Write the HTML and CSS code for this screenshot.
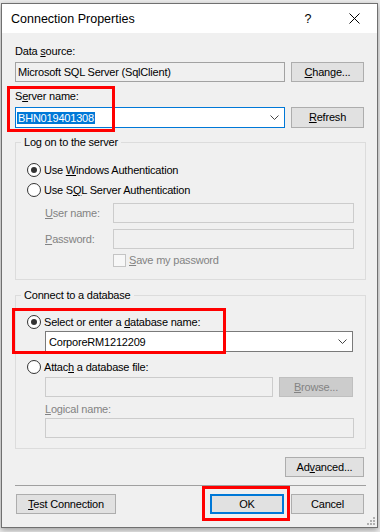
FILE: index.html
```html
<!DOCTYPE html>
<html lang="en">
  <head>
    <meta charset="UTF-8" />
    <title>Connection Properties</title>
    <link rel="stylesheet" href="styles.css">
  </head>
  <body>
    <div class="window">
      <!-- Title bar -->
      <div class="titlebar">
        <span class="title">Connection Properties</span>
        <div class="caption-btn help">?</div>
        <div class="caption-btn">
          <svg width="11" height="11" viewBox="0 0 11 11">
            <path d="M0.5 0.5 L10.5 10.5 M10.5 0.5 L0.5 10.5" stroke="#000" stroke-width="1" fill="none" />
          </svg>
        </div>
      </div>

      <div class="content">
        <!-- Data source -->
        <p class="label">Data <u>s</u>ource:</p>
        <div class="row">
          <div class="textbox readonly source-box">Microsoft SQL Server (SqlClient)</div>
          <div class="btn change-btn"><u>C</u>hange...</div>
        </div>

        <!-- Server name -->
        <p class="label server-label">S<u>e</u>rver name:</p>
        <div class="row">
          <div class="combo focused server-combo">
            <span class="selected">BHN019401308</span>
            <svg class="chevron" width="9" height="5" viewBox="0 0 9 5">
              <path d="M0.5 0.5 L4.5 4.5 L8.5 0.5" stroke="#444" fill="none" />
            </svg>
          </div>
          <div class="btn refresh-btn"><u>R</u>efresh</div>
        </div>

        <!-- Log on group -->
        <div class="group logon-group">
          <p class="group-title">Log on to the server</p>
          <div class="option first-option">
            <span class="radio checked"></span>
            <span>Use <u>W</u>indows Authentication</span>
          </div>
          <div class="option second-option">
            <span class="radio"></span>
            <span>Use S<u>Q</u>L Server Authentication</span>
          </div>
          <div class="field user-field">
            <span class="field-label disabled-text"><u>U</u>ser name:</span>
            <div class="textbox disabled field-box"></div>
          </div>
          <div class="field password-field">
            <span class="field-label disabled-text"><u>P</u>assword:</span>
            <div class="textbox disabled field-box"></div>
          </div>
          <div class="check-row">
            <span class="checkbox"></span>
            <span class="disabled-text"><u>S</u>ave my password</span>
          </div>
        </div>

        <!-- Database group -->
        <div class="group database-group">
          <p class="group-title">Connect to a database</p>
          <div class="option db-option">
            <span class="radio checked"></span>
            <span>Select or enter a <u>d</u>atabase name:</span>
          </div>
          <div class="combo db-combo">
            <span class="combo-text">CorporeRM1212209</span>
            <svg class="chevron" width="9" height="5" viewBox="0 0 9 5">
              <path d="M0.5 0.5 L4.5 4.5 L8.5 0.5" stroke="#444" fill="none" />
            </svg>
          </div>
          <div class="option attach-option">
            <span class="radio"></span>
            <span>Attac<u>h</u> a database file:</span>
          </div>
          <div class="indent-row file-row">
            <div class="textbox disabled file-box"></div>
            <div class="btn disabled browse-btn"><u>B</u>rowse...</div>
          </div>
          <p class="label disabled-text logical-label"><u>L</u>ogical name:</p>
          <div class="textbox disabled logical-box"></div>
        </div>

        <!-- Advanced -->
        <div class="advanced-row">
          <div class="btn advanced-btn">Ad<u>v</u>anced...</div>
        </div>

        <div class="separator"></div>

        <!-- Bottom buttons -->
        <div class="footer">
          <div class="btn test-btn"><u>T</u>est Connection</div>
          <div class="btn default ok-btn">OK</div>
          <div class="btn cancel-btn">Cancel</div>
        </div>
      </div>

      <!-- resize grip -->
      <svg class="grip" width="8" height="8" viewBox="0 0 8 8">
        <rect x="6" y="0" width="2" height="2" fill="#b0b0b0" />
        <rect x="3" y="3" width="2" height="2" fill="#b0b0b0" />
        <rect x="6" y="3" width="2" height="2" fill="#b0b0b0" />
        <rect x="0" y="6" width="2" height="2" fill="#b0b0b0" />
        <rect x="3" y="6" width="2" height="2" fill="#b0b0b0" />
        <rect x="6" y="6" width="2" height="2" fill="#b0b0b0" />
      </svg>
    </div>

    <!-- red annotation boxes -->
    <div class="mark mark-server"></div>
    <div class="mark mark-database"></div>
    <div class="mark mark-ok"></div>
  </body>
</html>
```

FILE: styles.css
```css
* {
  margin: 0;
  padding: 0;
  box-sizing: border-box;
}

body {
  position: relative;
  height: 532px;
  overflow: hidden;
  background-color: #ededed;
  font-family: "Liberation Sans", Arial, sans-serif;
  font-size: 11px;
  letter-spacing: -0.2px;
  color: #000;
}

u {
  text-decoration: underline;
  text-underline-offset: 1px;
}

.window {
  position: relative;
  margin: 3px 0 0 1px;
  width: 377px;
  height: 525px;
  background-color: #f0f0f0;
  border: 1px solid #707070;
  box-shadow: 0 2px 6px rgba(0, 0, 0, 0.35);
}

/* Title bar */
.titlebar {
  display: flex;
  align-items: center;
  height: 29px;
  padding-left: 9px;
  background-color: #fff;
}

.title {
  flex: 1;
  font-size: 12.5px;
  letter-spacing: 0;
}

.caption-btn {
  display: flex;
  align-items: center;
  justify-content: center;
  width: 46px;
  height: 29px;
}

.help {
  font-size: 12.5px;
  letter-spacing: 0;
}

.content {
  padding: 12px 11px 0 13px;
}

.label {
  height: 13px;
  line-height: 13px;
}

.row {
  display: flex;
  gap: 6px;
  margin-top: 4px;
}

.server-label {
  margin-top: 8px;
}

/* Text boxes, combos, buttons */
.textbox {
  height: 20px;
  padding-left: 2px;
  line-height: 18px;
  white-space: nowrap;
  background-color: #fff;
  border: 1px solid #7a7a7a;
}

.textbox.readonly {
  background-color: #f0f0f0;
  border-color: #a2a2a2;
}

.textbox.disabled {
  background-color: #f0f0f0;
  border-color: #cccccc;
}

.source-box {
  width: 270px;
}

.combo {
  display: flex;
  align-items: center;
  height: 21px;
  padding: 0 5px 0 1px;
  background-color: #fff;
  border: 1px solid #7a7a7a;
}

.combo.focused {
  border-color: #0078d7;
}

.combo .chevron {
  margin-left: auto;
}

.selected {
  display: inline-block;
  padding: 0 1px;
  line-height: 12px;
  color: #fff;
  background-color: #0078d7;
}

.combo-text {
  padding-left: 2px;
}

.server-combo {
  width: 270px;
}

.btn {
  height: 20px;
  line-height: 18px;
  text-align: center;
  white-space: nowrap;
  background-color: #e1e1e1;
  border: 1px solid #adadad;
}

.btn.disabled {
  color: #838383;
  background-color: #cccccc;
  border-color: #bfbfbf;
}

.btn.default {
  line-height: 16px;
  border: 2px solid #0078d7;
}

.change-btn {
  width: 73px;
}

.refresh-btn {
  width: 73px;
  height: 21px;
  line-height: 19px;
}

/* Group boxes */
.group {
  padding: 0 11px 12px 11px;
  border: 1px solid #dcdcdc;
}

.group-title {
  width: max-content;
  margin: -7px 0 0 -6px;
  padding: 0 3px;
  line-height: 13px;
  background-color: #f0f0f0;
}

.logon-group {
  margin-top: 14px;
}

.database-group {
  margin-top: 15px;
  padding-bottom: 10px;
}

.option {
  display: flex;
  align-items: center;
  gap: 3px;
  height: 18px;
}

.first-option {
  margin-top: 12px;
}

.second-option {
  margin-top: 2px;
}

.radio {
  display: flex;
  align-items: center;
  justify-content: center;
  width: 14px;
  height: 14px;
  background-color: #fff;
  border: 1px solid #333;
  border-radius: 50%;
}

.radio.checked::after {
  content: "";
  width: 6px;
  height: 6px;
  border-radius: 50%;
  background-color: #333;
}

.disabled-text {
  color: #838383;
}

.field {
  display: flex;
  align-items: center;
  margin-left: 18px;
}

.field-label {
  width: 68px;
}

.field-box {
  width: 241px;
}

.user-field {
  margin-top: 4px;
}

.password-field {
  margin-top: 6px;
}

.check-row {
  display: flex;
  align-items: center;
  gap: 3px;
  height: 14px;
  margin: 4px 0 0 86px;
}

.checkbox {
  width: 13px;
  height: 13px;
  background-color: #f7f7f7;
  border: 1px solid #c4c4c4;
}

.db-option {
  margin-top: 11px;
}

.db-combo {
  width: 308px;
  margin-left: 18px;
}

.attach-option {
  margin-top: 6px;
}

.indent-row {
  display: flex;
  gap: 6px;
  margin: 1px 0 0 18px;
}

.file-box {
  width: 228px;
}

.browse-btn {
  width: 74px;
}

.logical-label {
  margin: 6px 0 0 18px;
}

.logical-box {
  width: 309px;
  margin: 2px 0 0 18px;
}

/* Footer */
.advanced-row {
  display: flex;
  justify-content: flex-end;
  margin-top: 8px;
  padding-right: 2px;
}

.advanced-btn {
  width: 79px;
}

.separator {
  height: 1px;
  margin-top: 8px;
  background-color: #a0a0a0;
}

.footer {
  display: flex;
  margin-top: 8px;
  padding: 0 2px 0 1px;
}

.test-btn {
  width: 100px;
}

.ok-btn {
  width: 74px;
  margin-left: auto;
}

.cancel-btn {
  width: 73px;
  margin-left: 7px;
}

.grip {
  position: absolute;
  right: 2px;
  bottom: 2px;
}

/* red annotation boxes */
.mark {
  position: absolute;
  border: 3px solid #f00;
}

.mark-server {
  left: 7px;
  top: 86px;
  width: 108px;
  height: 46px;
}

.mark-database {
  left: 12px;
  top: 308px;
  width: 214px;
  height: 46px;
}

.mark-ok {
  left: 202px;
  top: 486px;
  width: 88px;
  height: 35px;
}
```
